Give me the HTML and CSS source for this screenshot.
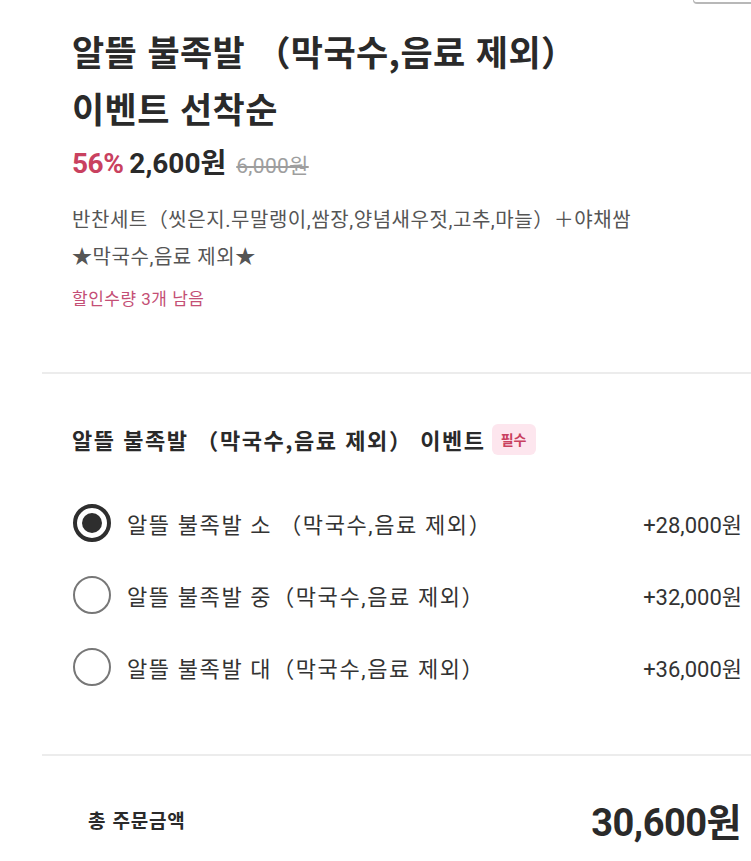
FILE: index.html
```html
<!DOCTYPE html>
<html lang="ko">
<head>
<meta charset="utf-8">
<link rel="stylesheet" href="styles.css">
</head>
<body>
<div class="corner"></div>
<section class="product">
  <h1 class="title">알뜰 불족발 （막국수,음료 제외）<br>이벤트 선착순</h1>
  <div class="price-row">
    <span class="rate">56%</span>
    <span class="price">2,600원</span>
    <span class="origin">6,000원</span>
  </div>
  <p class="desc">반찬세트（씻은지.무말랭이,쌈장,양념새우젓,고추,마늘）＋야채쌈<br>★막국수,음료 제외★</p>
  <p class="stock">할인수량 3개 남음</p>
</section>
<hr class="divider first">
<section class="options">
  <div class="opt-head">
    <h2 class="opt-title">알뜰 불족발 （막국수,음료 제외） 이벤트</h2>
    <span class="badge">필수</span>
  </div>
  <ul class="opt-list">
    <li class="opt">
      <span class="radio checked"></span>
      <span class="opt-name">알뜰 불족발 소 （막국수,음료 제외）</span>
      <span class="opt-price">+28,000원</span>
    </li>
    <li class="opt">
      <span class="radio"></span>
      <span class="opt-name">알뜰 불족발 중（막국수,음료 제외）</span>
      <span class="opt-price">+32,000원</span>
    </li>
    <li class="opt">
      <span class="radio"></span>
      <span class="opt-name">알뜰 불족발 대（막국수,음료 제외）</span>
      <span class="opt-price">+36,000원</span>
    </li>
  </ul>
</section>
<hr class="divider second">
<section class="total">
  <span class="total-label">총 주문금액</span>
  <span class="total-price">30,600원</span>
</section>
</body>
</html>
```
FILE: styles.css
```css
* { box-sizing: border-box; }
html, body { margin: 0; padding: 0; background: #fff; }
body {
  font-family: Roboto, "Noto Sans CJK KR", sans-serif;
  color: #2b2b2b;
  width: 751px;
  height: 861px;
  overflow: hidden;
  position: relative;
}
.corner {
  position: absolute;
  top: 0;
  right: 0;
  width: 58px;
  height: 4px;
  border-bottom: 2px solid #b8b8b8;
  border-left: 1px solid #b8b8b8;
  border-bottom-left-radius: 4px;
}
.product { padding: 22px 20px 0 72px; }
.title {
  margin: 0;
  font-family: "Noto Sans CJK KR", sans-serif;
  font-weight: 700;
  font-size: 35px;
  line-height: 57px;
  letter-spacing: 0.4px;
  color: #2a2a2a;
}
.price-row {
  display: flex;
  align-items: baseline;
  margin-top: 12px;
  height: 32px;
  line-height: 32px;
  font-family: Roboto, "Noto Sans CJK KR", sans-serif;
}
.rate { font-size: 28px; font-weight: 700; color: #c9415f; letter-spacing: -0.5px; }
.price { margin-left: 6px; font-size: 28px; font-weight: 700; color: #2a2a2a; letter-spacing: 0; }
.origin { margin-left: 10px; font-size: 21px; color: #9e9e9e; text-decoration: line-through; letter-spacing: 0.3px; }
.desc {
  margin: 22px 0 0;
  font-size: 20px;
  line-height: 37px;
  color: #555;
  letter-spacing: 0.55px;
}
.stock {
  margin: 11px 0 0;
  font-size: 17px;
  line-height: 24px;
  color: #c44f75;
  letter-spacing: 0.5px;
}
.divider {
  margin: 0 0 0 42px;
  border: 0;
  border-top: 2px solid #ececec;
  height: 0;
}
.divider.first { margin-top: 61px; }
.divider.second { margin-top: 51px; }
.options { padding: 49px 9px 0 72px; }
.opt-head { display: flex; align-items: center; gap: 6px; height: 32px; }
.opt-title {
  margin: 0;
  font-family: "Noto Sans CJK KR", sans-serif;
  font-size: 22px;
  font-weight: 700;
  letter-spacing: 1.55px;
  color: #2a2a2a;
}
.badge {
  display: flex;
  align-items: center;
  justify-content: center;
  width: 44px;
  height: 31px;
  background: #fde6ee;
  color: #c9415f;
  font-size: 14px;
  font-weight: 700;
  border-radius: 6px;
}
.opt-list { list-style: none; margin: 32px 0 0; padding: 0; }
.opt {
  display: flex;
  align-items: center;
  height: 72px;
}
.radio {
  width: 38px;
  height: 38px;
  border-radius: 50%;
  border: 2.5px solid #777;
  flex: none;
  position: relative;
  margin-left: 1px;
}
.radio.checked { border: 4px solid #2e2e2e; }
.radio.checked::after {
  content: "";
  position: absolute;
  left: 50%;
  top: 50%;
  width: 20px;
  height: 20px;
  margin: -10px 0 0 -10px;
  border-radius: 50%;
  background: #2e2e2e;
}
.opt-name {
  margin-left: 16px;
  font-size: 22px;
  color: #333;
  flex: 1;
  letter-spacing: 1.6px;
}
.opt-price { font-size: 22px; color: #333; }
.total {
  display: flex;
  justify-content: space-between;
  align-items: center;
  height: 46px;
  margin-top: 40px;
  padding: 0 10px 0 88px;
}
.total-label {
  font-family: "Noto Sans CJK KR", sans-serif;
  font-size: 19px;
  font-weight: 700;
  color: #2a2a2a;
  letter-spacing: 0.8px;
}
.total-price {
  font-size: 38px;
  font-weight: 700;
  color: #2a2a2a;
  letter-spacing: -0.5px;
}
```
